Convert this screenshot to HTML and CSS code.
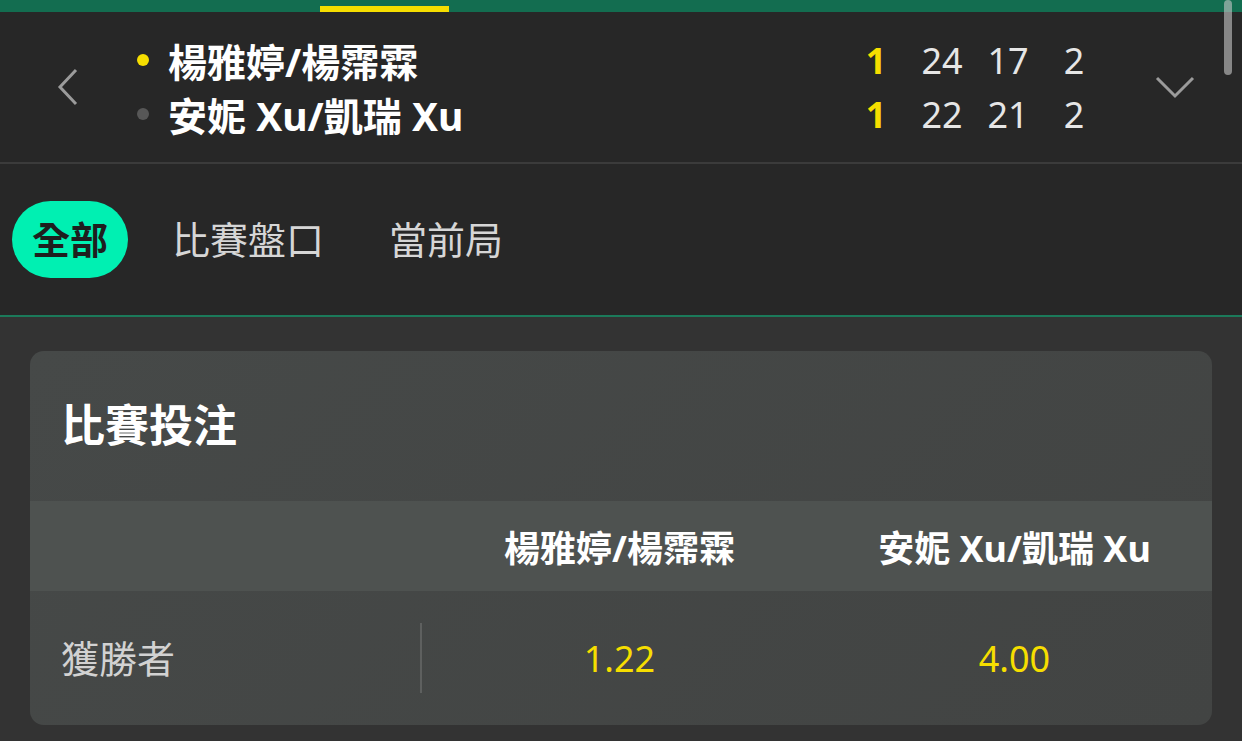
FILE: index.html
```html
<!DOCTYPE html>
<html lang="zh-Hant">
<head>
    <meta charset="UTF-8">
    <meta name="viewport" content="width=device-width, initial-scale=1.0">
    <title>比賽投注</title>
    <link rel="stylesheet" href="styles.css">
</head>
<body>
    <div class="topbar">
        <div class="topbar-active"></div>
    </div>
    <div class="scrollbar"></div>

    <div class="match">
        <div class="nav-side">
            <svg width="24" height="38" viewBox="0 0 24 38">
                <polyline points="20,2 4,19 20,36" fill="none" stroke="#9b9b9b" stroke-width="3"/>
            </svg>
        </div>
        <div class="teams">
            <div class="team"><span class="dot serving"></span>楊雅婷/楊霈霖</div>
            <div class="team"><span class="dot"></span>安妮 Xu/凱瑞 Xu</div>
        </div>
        <div class="scores">
            <span class="sets">1</span><span>24</span><span>17</span><span>2</span>
            <span class="sets">1</span><span>22</span><span>21</span><span>2</span>
        </div>
        <div class="nav-side">
            <svg width="40" height="24" viewBox="0 0 40 24">
                <polyline points="2,3 20,21 38,3" fill="none" stroke="#9b9b9b" stroke-width="3"/>
            </svg>
        </div>
    </div>

    <div class="tabs">
        <div class="tab active">全部</div>
        <div class="tab">比賽盤口</div>
        <div class="tab">當前局</div>
    </div>

    <div class="content">
        <div class="market">
            <h2 class="market-title">比賽投注</h2>
            <div class="market-head">
                <div class="cell label"></div>
                <div class="cell">楊雅婷/楊霈霖</div>
                <div class="cell">安妮 Xu/凱瑞 Xu</div>
            </div>
            <div class="market-row">
                <div class="cell label">獲勝者</div>
                <div class="cell odds">1.22</div>
                <div class="cell odds">4.00</div>
            </div>
        </div>
    </div>
</body>
</html>
```

FILE: styles.css
```css
body {
    margin: 0;
    padding: 0;
    background: #333333;
    font-family: "Noto Sans", "Noto Sans CJK TC", sans-serif;
    color: white;
    height: 741px;
    overflow: hidden;
}
.topbar {
    height: 12px;
    background: #136d50;
    display: flex;
    align-items: flex-end;
}
.topbar-active {
    margin-left: 320px;
    width: 129px;
    height: 6px;
    background: #f6de00;
}
.scrollbar {
    position: absolute;
    top: 0;
    right: 10px;
    width: 8px;
    height: 75px;
    border-radius: 4px;
    background: rgba(200, 200, 200, 0.6);
}
.match {
    height: 150px;
    background: #272727;
    border-bottom: 2px solid #3b3b3b;
    display: flex;
    align-items: center;
}
.nav-side {
    width: 135px;
    display: flex;
    justify-content: center;
    align-items: center;
}
.teams {
    flex: 1;
    padding-left: 2px;
}
.team {
    display: flex;
    align-items: center;
    height: 54px;
    font-size: 39px;
    font-weight: bold;
}
.dot {
    width: 12px;
    height: 12px;
    border-radius: 50%;
    background: #575757;
    margin-right: 19px;
}
.dot.serving {
    background: #f6de00;
}
.scores {
    display: grid;
    grid-template-columns: repeat(4, 66px);
    grid-auto-rows: 54px;
    align-items: center;
    text-align: center;
    font-size: 36px;
    color: #e6e6e6;
}
.scores .sets {
    color: #f6de00;
    font-weight: bold;
}
.tabs {
    height: 151px;
    background: #272727;
    border-bottom: 2px solid #1b7a5a;
    display: flex;
    align-items: center;
    padding-left: 12px;
}
.tab {
    padding: 0 20px;
    font-size: 38px;
    color: #d6d6d6;
    height: 77px;
    line-height: 77px;
    margin-right: 25px;
}
.tab.active {
    background: #00f0b2;
    color: #1e1e1e;
    font-weight: bold;
    border-radius: 39px;
    margin-right: 24px;
}
.content {
    padding: 34px 30px 0;
}
.market {
    background: linear-gradient(135deg, #464948, #424443);
    border-radius: 14px;
    overflow: hidden;
}
.market-title {
    margin: 0;
    height: 150px;
    line-height: 148px;
    padding-left: 31px;
    font-size: 44px;
    font-weight: bold;
}
.market-head, .market-row {
    display: grid;
    grid-template-columns: 392px 1fr 1fr;
    align-items: center;
}
.market-head {
    height: 90px;
    background: #4e5250;
    font-size: 36px;
    font-weight: bold;
}
.market-row {
    height: 134px;
}
.cell {
    text-align: center;
}
.cell.label {
    text-align: left;
    padding-left: 31px;
}
.market-row .label {
    font-size: 38px;
    color: #d2d2d2;
    border-right: 2px solid #5e605f;
    height: 70px;
    line-height: 70px;
}
.odds {
    font-size: 36px;
    color: #f6de00;
}
```
